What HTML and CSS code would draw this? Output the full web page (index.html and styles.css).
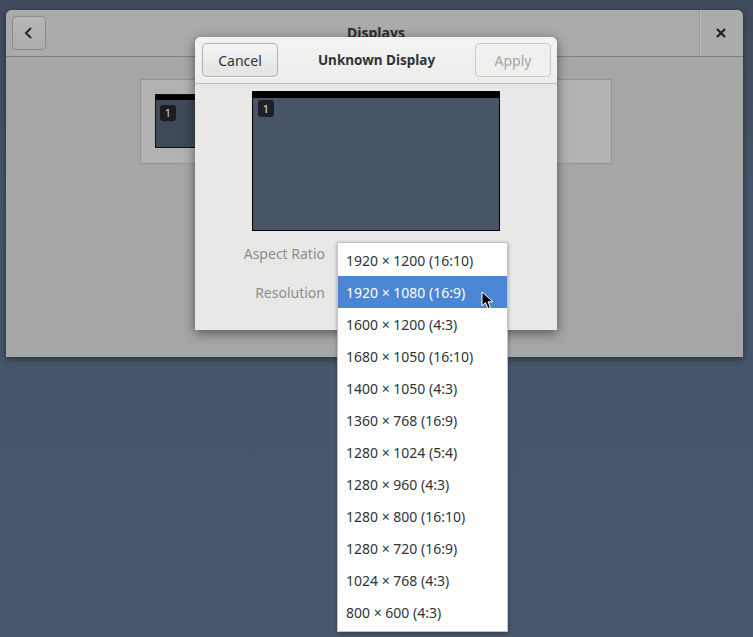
FILE: index.html
```html
<!DOCTYPE html>
<html>
<head>
<meta charset="utf-8">
<link rel="stylesheet" href="styles.css">
</head>
<body>
<div class="desktop">
  <div class="window">
    <div class="win-header">
      <div class="back-btn">
        <svg width="12" height="14" viewBox="0 0 12 14"><path d="M8 2 L3 7 L8 12" fill="none" stroke="#2a2a2a" stroke-width="2"/></svg>
      </div>
      <div class="win-title">Displays</div>
      <div class="close-area">
        <svg width="10" height="10" viewBox="0 0 10 10"><path d="M1 1 L9 9 M9 1 L1 9" stroke="#1e1e1e" stroke-width="2.2"/></svg>
      </div>
    </div>
    <div class="win-content">
      <div class="frame">
        <div class="mini-mon">
          <div class="mon-bar"></div>
          <div class="mini-badge">1</div>
        </div>
      </div>
    </div>
  </div>

  <div class="dialog">
    <div class="dlg-header">
      <button class="btn">Cancel</button>
      <div class="dlg-title">Unknown Display</div>
      <button class="btn disabled">Apply</button>
    </div>
    <div class="dlg-body">
      <div class="monitor">
        <div class="mon-bar big"></div>
        <div class="badge">1</div>
      </div>
      <div class="rows">
        <div class="row-label">Aspect Ratio</div>
        <div class="row-label">Resolution</div>
      </div>
    </div>
  </div>

  <div class="popover">
    <div class="item">1920 × 1200 (16:10)</div>
    <div class="item selected">1920 × 1080 (16:9)</div>
    <div class="item">1600 × 1200 (4:3)</div>
    <div class="item">1680 × 1050 (16:10)</div>
    <div class="item">1400 × 1050 (4:3)</div>
    <div class="item">1360 × 768 (16:9)</div>
    <div class="item">1280 × 1024 (5:4)</div>
    <div class="item">1280 × 960 (4:3)</div>
    <div class="item">1280 × 800 (16:10)</div>
    <div class="item">1280 × 720 (16:9)</div>
    <div class="item">1024 × 768 (4:3)</div>
    <div class="item">800 × 600 (4:3)</div>
  </div>

  <svg class="cursor" width="14" height="20" viewBox="0 0 14 20">
    <path d="M1 1 L1 15 L4.5 11.5 L7 17.5 L9.5 16.5 L7 10.8 L12 10.8 Z" fill="#000" stroke="#fff" stroke-width="1"/>
  </svg>
</div>
</body>
</html>
```

FILE: styles.css
```css
* { box-sizing: border-box; }
html, body { margin: 0; padding: 0; }
body {
  width: 753px;
  height: 637px;
  overflow: hidden;
  font-family: "Noto Sans", "Open Sans", sans-serif;
  font-size: 14px;
  color: #2e3436;
}
.desktop {
  position: relative;
  width: 753px;
  height: 637px;
  background: linear-gradient(#404b5c, #46556a 30%, #48576c);
  padding: 10px 10px 0 6px;
}
.window {
  width: 737px;
  height: 347px;
  border-radius: 6px 6px 0 0;
  background: #a6a6a5;
  box-shadow: 0 2px 6px rgba(0,0,0,0.45);
  overflow: hidden;
  display: flex;
  flex-direction: column;
}
.win-header {
  height: 47px;
  background: #ababab;
  border-bottom: 1px solid #7f7f7f;
  display: flex;
  align-items: center;
  padding-left: 6px;
}
.back-btn {
  width: 34px;
  height: 34px;
  border: 1px solid #8c8c8c;
  border-radius: 4px;
  background: linear-gradient(#b6b6b6, #adadad);
  display: flex;
  align-items: center;
  justify-content: center;
}
.win-title {
  flex: 1;
  text-align: center;
  font-weight: bold;
  font-size: 14px;
  color: #2c2c2c;
  padding-left: 7px;
  margin-top: -2px;
}
.close-area {
  width: 44px;
  height: 100%;
  border-left: 1px solid #9a9a9a;
  box-shadow: inset 1px 0 0 #b8b8b8;
  display: flex;
  align-items: center;
  justify-content: center;
  padding-right: 2px;
}
.win-content {
  flex: 1;
  padding: 22px 0 0 134px;
}
.frame {
  width: 472px;
  height: 85px;
  background: #b2b2b1;
  border: 1px solid #939393;
  padding: 14px 0 0 14px;
}
.mini-mon {
  position: relative;
  width: 80px;
  height: 54px;
  background: #3f4957;
  border: 1px solid #111;
}
.mon-bar {
  height: 5px;
  background: #000;
}
.mini-badge {
  position: absolute;
  left: 4px;
  top: 10px;
  width: 16px;
  height: 16px;
  border-radius: 3px;
  background: #1a1d22;
  color: #d8d8d8;
  font-size: 11px;
  line-height: 16px;
  text-align: center;
}
.dialog {
  position: absolute;
  left: 195px;
  top: 37px;
  width: 362px;
  height: 293px;
  border-radius: 6px 6px 0 0;
  background: #e8e8e7;
  box-shadow: 0 3px 12px rgba(0,0,0,0.5);
  overflow: hidden;
  display: flex;
  flex-direction: column;
}
.dlg-header {
  height: 47px;
  background: linear-gradient(#f3f3f3, #ededec);
  border-bottom: 1px solid #bdbdbd;
  display: flex;
  align-items: center;
  padding: 0 6px 0 7px;
}
.btn {
  height: 34px;
  width: 76px;
  font-family: inherit;
  font-size: 14px;
  color: #2e3436;
  background: linear-gradient(#f5f5f5, #e2e2e1);
  border: 1px solid #b4b4b3;
  border-radius: 4px;
  box-shadow: 0 1px 0 rgba(255,255,255,0.8);
  padding: 0;
}
.btn.disabled {
  background: #f0f0ef;
  border-color: #cbcbca;
  color: #a4a5a4;
  box-shadow: none;
}
.dlg-title {
  flex: 1;
  text-align: center;
  font-weight: bold;
  font-size: 13.5px;
  color: #2e3436;
}
.dlg-body {
  flex: 1;
  padding: 7px 0 0 57px;
}
.monitor {
  position: relative;
  width: 248px;
  height: 140px;
  background: #485566;
  border: 1px solid #000;
}
.mon-bar.big { height: 6px; }
.badge {
  position: absolute;
  left: 5px;
  top: 8px;
  width: 16px;
  height: 17px;
  border-radius: 3px;
  background: #1c2028;
  color: #e4e4e4;
  font-size: 11px;
  line-height: 17px;
  text-align: center;
}
.rows {
  margin-top: 13px;
  margin-left: -57px;
  width: 130px;
  display: flex;
  flex-direction: column;
  gap: 19px;
  align-items: flex-end;
}
.row-label {
  color: #8b8e8f;
  font-size: 14px;
  line-height: 20px;
}
.popover {
  position: absolute;
  left: 337px;
  top: 242px;
  width: 171px;
  height: 390px;
  background: #fff;
  border: 1px solid #c4c4c4;
  box-shadow: 0 1px 4px rgba(0,0,0,0.3);
  padding-top: 1px;
}
.item {
  height: 32px;
  line-height: 32px;
  padding-left: 8px;
  padding-top: 1px;
  color: #2e3436;
  font-size: 14px;
  white-space: nowrap;
}
.item.selected {
  background: #4a86d3;
  color: #fff;
}
.cursor {
  position: absolute;
  left: 481px;
  top: 291px;
}
```
